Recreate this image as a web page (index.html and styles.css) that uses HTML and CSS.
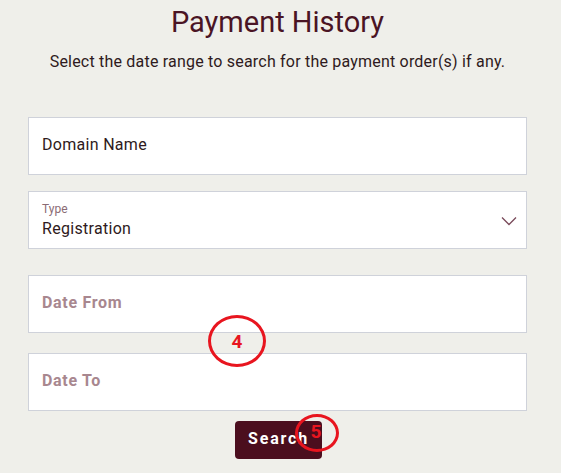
FILE: index.html
```html
<!DOCTYPE html>
<html>
<head>
<meta charset="utf-8">
<link rel="stylesheet" href="styles.css">
</head>
<body>
<div class="page">
  <h1 class="title">Payment History</h1>
  <p class="subtitle">Select the date range to search for the payment order(s) if any.</p>
  <form class="form">
    <div class="field"><span class="value">Domain Name</span></div>
    <div class="field select">
      <div class="select-text">
        <span class="label">Type</span>
        <span class="value">Registration</span>
      </div>
      <svg class="chevron" width="16" height="10" viewBox="0 0 16 10"><path d="M1 1.5 L8 8.5 L15 1.5" fill="none" stroke="#7a4a5a" stroke-width="1.3"/></svg>
    </div>
    <div class="field date"><span class="placeholder">Date From</span></div>
    <div class="field date"><span class="placeholder">Date To</span></div>
    <div class="actions"><button type="button" class="btn">Search</button></div>
  </form>
  <div class="mark mark4"><span>4</span></div>
  <div class="mark mark5"><span>5</span></div>
</div>
</body>
</html>
```
FILE: styles.css
```css
* { box-sizing: border-box; }
html, body { margin: 0; padding: 0; }
body {
  background: #efefea;
  font-family: Roboto, "Liberation Sans", Arial, sans-serif;
  color: #3a1520;
  width: 561px;
  height: 473px;
  overflow: hidden;
}
.page {
  position: relative;
  padding: 0 34px 0 28px;
  height: 473px;
}
.title {
  margin: 0;
  padding-top: 4px;
  font-size: 29px;
  line-height: 36px;
  font-weight: 400;
  text-align: center;
  color: #4a1424;
}
.subtitle {
  margin: 12px 0 0;
  font-size: 16px;
  line-height: 20px;
  letter-spacing: 0.2px;
  text-align: center;
  color: #2e1a20;
}
.form {
  margin-top: 45px;
  display: flex;
  flex-direction: column;
}
.field {
  height: 58px;
  background: #fff;
  border: 1px solid #cfd2da;
  display: flex;
  align-items: center;
  padding: 0 13px 3px;
  margin-bottom: 16px;
}
.value {
  font-size: 16px;
  letter-spacing: 0.3px;
  color: #2e1a20;
}
.select {
  justify-content: space-between;
  margin-bottom: 26px;
}
.select-text {
  display: flex;
  flex-direction: column;
  padding-top: 2px;
}
.label {
  font-size: 12px;
  color: #8a6b74;
  line-height: 14px;
  margin-bottom: 3px;
}
.chevron { margin-right: -4px; margin-top: 4px; }
.date { margin-bottom: 20px; }
.date + .date { margin-bottom: 10px; }
.placeholder {
  font-size: 16px;
  font-weight: 700;
  letter-spacing: 0.7px;
  color: #a8878f;
}
.actions {
  display: flex;
  justify-content: center;
  padding-left: 2px;
}
.btn {
  width: 87px;
  height: 38px;
  border: 0;
  border-radius: 4px;
  background: #4b0e1e;
  color: #fff;
  font-family: inherit;
  font-size: 16px;
  font-weight: 700;
  letter-spacing: 1.8px;
  padding: 0 0 3px;
}
.mark {
  position: absolute;
  border: 3.5px solid #e8151f;
  border-radius: 50%;
  display: flex;
  align-items: center;
  justify-content: center;
  color: #e8151f;
  font-weight: 700;
  font-size: 19px;
}
.mark4 { left: 208px; top: 315px; width: 58px; height: 52px; }
.mark5 { left: 295px; top: 414px; width: 44px; height: 38px; }
.mark5 span { margin-left: -2px; margin-top: -4px; }
```
